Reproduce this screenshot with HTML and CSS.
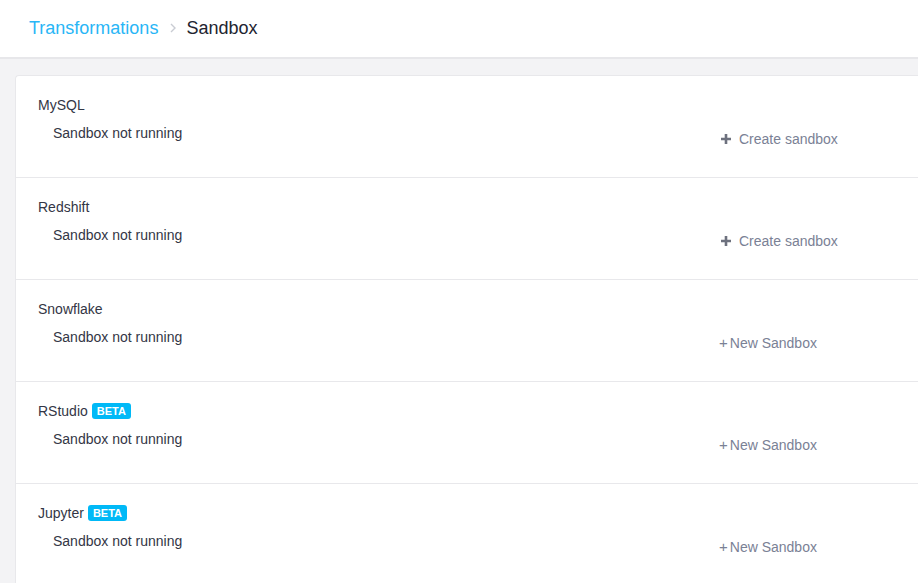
FILE: index.html
```html
<!DOCTYPE html>
<html>
<head>
<meta charset="utf-8">
<link rel="stylesheet" href="styles.css">
</head>
<body>
<header class="topbar">
  <nav class="crumbs">
    <a class="crumb-link">Transformations</a>
    <span class="crumb-sep">
      <svg width="6" height="10" viewBox="0 0 6 10"><path d="M1 1l4 4-4 4" fill="none" stroke="#c9ccd3" stroke-width="1.4"/></svg>
    </span>
    <span class="crumb-current">Sandbox</span>
  </nav>
</header>
<main class="content">
  <section class="card">
    <div class="row">
      <div class="title">MySQL</div>
      <div class="body">
        <div class="status">Sandbox not running</div>
        <div class="action action-create"><svg class="plus-bold" width="12" height="12" viewBox="0 0 12 12"><path d="M6 1v10M1 6h10" stroke="#6d717e" stroke-width="2.6"/></svg>Create sandbox</div>
      </div>
    </div>
    <div class="row">
      <div class="title">Redshift</div>
      <div class="body">
        <div class="status">Sandbox not running</div>
        <div class="action action-create"><svg class="plus-bold" width="12" height="12" viewBox="0 0 12 12"><path d="M6 1v10M1 6h10" stroke="#6d717e" stroke-width="2.6"/></svg>Create sandbox</div>
      </div>
    </div>
    <div class="row">
      <div class="title">Snowflake</div>
      <div class="body">
        <div class="status">Sandbox not running</div>
        <div class="action action-new"><span class="plus-thin">+</span>New Sandbox</div>
      </div>
    </div>
    <div class="row">
      <div class="title">RStudio <span class="badge">BETA</span></div>
      <div class="body">
        <div class="status">Sandbox not running</div>
        <div class="action action-new"><span class="plus-thin">+</span>New Sandbox</div>
      </div>
    </div>
    <div class="row">
      <div class="title">Jupyter <span class="badge">BETA</span></div>
      <div class="body">
        <div class="status">Sandbox not running</div>
        <div class="action action-new"><span class="plus-thin">+</span>New Sandbox</div>
      </div>
    </div>
  </section>
</main>
</body>
</html>
```
FILE: styles.css
```css
html, body {
  margin: 0;
  padding: 0;
}
body {
  font-family: "Liberation Sans", Arial, sans-serif;
  background: #f3f3f5;
  color: #333645;
  overflow: hidden;
}
.topbar {
  height: 57px;
  background: #fff;
  border-bottom: 2px solid #e7e7ea;
  display: flex;
  align-items: center;
  padding-left: 29px;
}
.crumbs {
  display: flex;
  align-items: center;
  font-size: 18px;
  line-height: 22px;
  margin-top: -1px;
}
.crumb-link {
  color: #29b6f6;
}
.crumb-sep {
  display: flex;
  align-items: center;
  margin: 0 10px 0 12px;
}
.crumb-current {
  color: #222430;
}
.content {
  padding: 16px 0 0 15px;
}
.card {
  background: #fff;
  border: 1px solid #e8e8eb;
  border-right: none;
  border-radius: 4px 0 0 0;
}
.row {
  height: 102px;
  box-sizing: border-box;
  padding: 19px 0 0 22px;
  border-bottom: 1px solid #e8e8eb;
  font-size: 14px;
  line-height: 20px;
}
.title {
  display: flex;
  align-items: center;
  color: #333645;
}
.badge {
  display: inline-block;
  margin-left: 4px;
  background: #00b9f7;
  color: #fff;
  font-size: 11px;
  font-weight: bold;
  line-height: 16px;
  padding: 0 5px;
  border-radius: 3px;
}
.body {
  display: grid;
  grid-template-columns: 667px auto;
  margin: 8px 0 0 15px;
}
.status {
  color: #333645;
}
.action {
  display: flex;
  align-items: center;
  margin-top: 6px;
  color: #7a8195;
}
.plus-bold {
  margin-right: 7px;
}
.plus-thin {
  margin: 0 2px 0 -1px;
  font-size: 15px;
  color: #7a8195;
}
```
